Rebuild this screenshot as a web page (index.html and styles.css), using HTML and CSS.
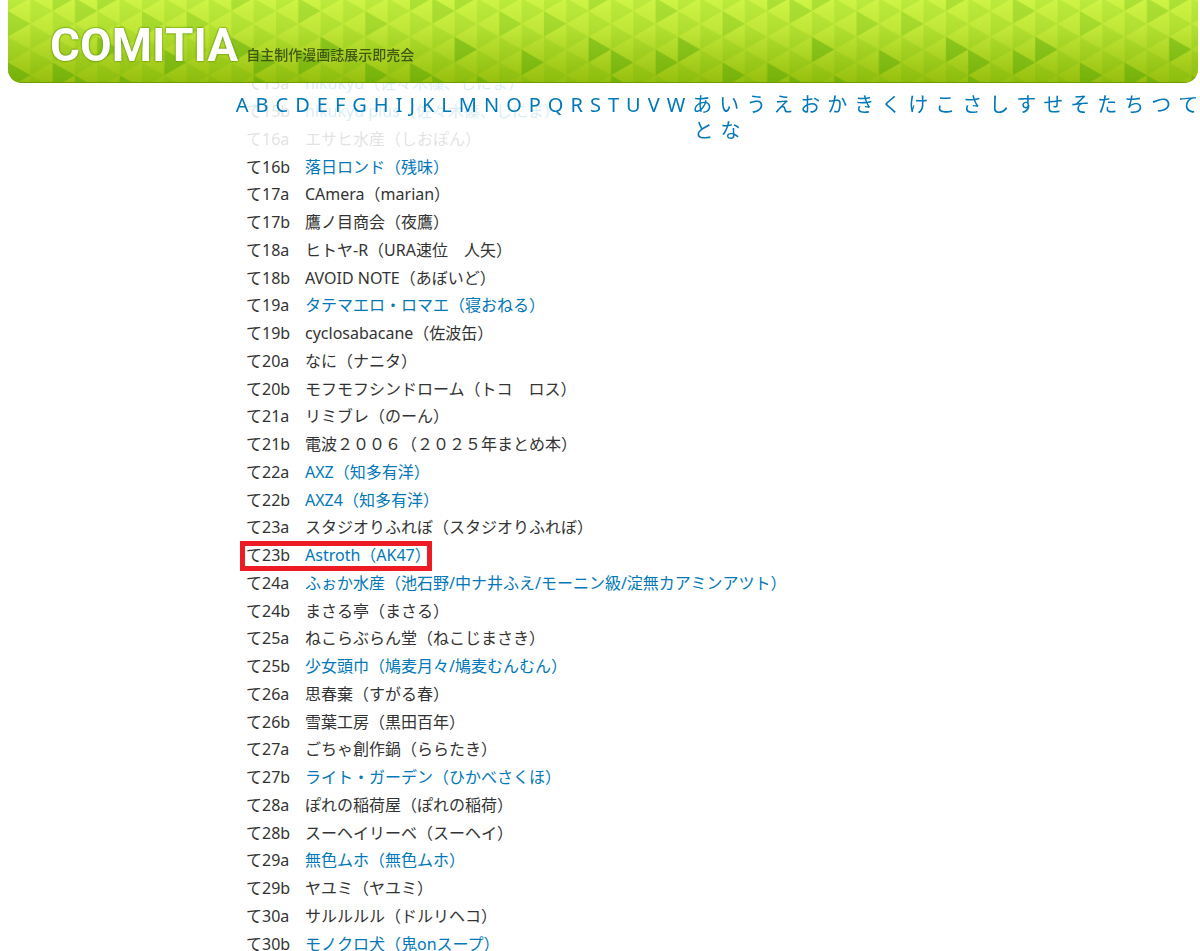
FILE: index.html
```html
<!DOCTYPE html>
<html lang="ja">
<head>
    <meta charset="UTF-8">
    <meta name="viewport" content="width=device-width, initial-scale=1.0">
    <title>COMITIA</title>
    <link rel="stylesheet" href="styles.css">
</head>
<body>
    <header class="header">
        <svg class="header-bg" aria-hidden="true">
            <defs>
                <linearGradient id="green" x1="0" y1="0" x2="0" y2="1">
                    <stop offset="0" stop-color="#cdf446"/>
                    <stop offset="0.35" stop-color="#c1e838"/>
                    <stop offset="1" stop-color="#96bf0e"/>
                </linearGradient>
                <!-- two columns of triangles -->
                <pattern id="tri" width="44.66" height="25.7" y="11" patternUnits="userSpaceOnUse">
                    <path d="M0 0L22.33 12.85L0 25.7z M22.33 -12.85L44.66 0L22.33 12.85z M22.33 12.85L44.66 25.7L22.33 38.55z" fill="#46a000" fill-opacity="0.13"/>
                </pattern>
                <!-- darker triangles, repeated every 16 columns -->
                <pattern id="dark" width="357.28" height="83" patternUnits="userSpaceOnUse">
                    <g fill="#46a000" fill-opacity="0.13">
                        <path d="M0 11l22.33 12.85L0 36.7z M133.98 11l22.33 12.85l-22.33 12.85z M178.64 11l22.33 12.85l-22.33 12.85z"/>
                        <path d="M66.99 -1.85l22.33 12.85l-22.33 12.85z M290.29 -1.85l22.33 12.85l-22.33 12.85z"/>
                        <path d="M44.66 -14.7l22.33 12.85l-22.33 12.85z M89.32 -14.7l22.33 12.85l-22.33 12.85z M223.3 -14.7l22.33 12.85l-22.33 12.85z"/>
                    </g>
                    <g fill="#3c9600" fill-opacity="0.28">
                        <path d="M89.32 36.7l22.33 12.85l-22.33 12.85z M223.3 36.7l22.33 12.85l-22.33 12.85z M312.62 36.7l22.33 12.85l-22.33 12.85z"/>
                        <path d="M156.31 49.55l22.33 12.85l-22.33 12.85z M245.63 49.55l22.33 12.85l-22.33 12.85z M290.29 49.55l22.33 12.85l-22.33 12.85z"/>
                        <path d="M0 62.4l22.33 12.85L0 88.1z M44.66 62.4l22.33 12.85l-22.33 12.85z"/>
                        <path d="M66.99 75.25l22.33 12.85H66.99z M111.65 75.25l22.33 12.85h-22.33z M245.63 75.25l22.33 12.85h-22.33z"/>
                    </g>
                </pattern>
            </defs>
            <rect width="100%" height="100%" fill="url(#green)"/>
            <rect width="100%" height="100%" fill="url(#tri)"/>
            <rect width="100%" height="100%" fill="url(#dark)"/>
        </svg>
        <h1 class="logo">COMITIA</h1>
        <p class="tagline">自主制作漫画誌展示即売会</p>
    </header>

    <nav class="index">
        <a href="#">A</a><a href="#">B</a><a href="#">C</a><a href="#">D</a><a href="#">E</a><a href="#">F</a><a href="#">G</a><a href="#">H</a><a href="#">I</a><a href="#">J</a><a href="#">K</a><a href="#">L</a><a href="#">M</a><a href="#">N</a><a href="#">O</a><a href="#">P</a><a href="#">Q</a><a href="#">R</a><a href="#">S</a><a href="#">T</a><a href="#">U</a><a href="#">V</a><a href="#">W</a>
        <a href="#">あ</a><a href="#">い</a><a href="#">う</a><a href="#">え</a><a href="#">お</a><a href="#">か</a><a href="#">き</a><a href="#">く</a><a href="#">け</a><a href="#">こ</a><a href="#">さ</a><a href="#">し</a><a href="#">す</a><a href="#">せ</a><a href="#">そ</a><a href="#">た</a><a href="#">ち</a><a href="#">つ</a><a href="#">て</a><a href="#">と</a><a href="#">な</a>
    </nav>

    <main class="content">
        <table class="circles">
            <tr><td>て15a</td><td><a href="#">nikukyu（佐々木篠、しにま）</a></td></tr>
            <tr><td>て15b</td><td><a href="#">nikukyu plus（佐々木篠、しにま）</a></td></tr>
            <tr><td>て16a</td><td>エサヒ水産（しおぽん）</td></tr>
            <tr><td>て16b</td><td><a href="#">落日ロンド（残味）</a></td></tr>
            <tr><td>て17a</td><td>CAmera（marian）</td></tr>
            <tr><td>て17b</td><td>鷹ノ目商会（夜鷹）</td></tr>
            <tr><td>て18a</td><td>ヒトヤ-R（URA速位　人矢）</td></tr>
            <tr><td>て18b</td><td>AVOID NOTE（あぼいど）</td></tr>
            <tr><td>て19a</td><td><a href="#">タテマエロ・ロマエ（寝おねる）</a></td></tr>
            <tr><td>て19b</td><td>cyclosabacane（佐波缶）</td></tr>
            <tr><td>て20a</td><td>なに（ナニタ）</td></tr>
            <tr><td>て20b</td><td>モフモフシンドローム（トコ　ロス）</td></tr>
            <tr><td>て21a</td><td>リミブレ（のーん）</td></tr>
            <tr><td>て21b</td><td>電波２００６（２０２５年まとめ本）</td></tr>
            <tr><td>て22a</td><td><a href="#">AXZ（知多有洋）</a></td></tr>
            <tr><td>て22b</td><td><a href="#">AXZ4（知多有洋）</a></td></tr>
            <tr><td>て23a</td><td>スタジオりふれぼ（スタジオりふれぼ）</td></tr>
            <tr class="marked"><td>て23b</td><td><a href="#">Astroth（AK47）</a></td></tr>
            <tr><td>て24a</td><td><a href="#">ふぉか水産（池石野/中ナ井ふえ/モーニン級/淀無カアミンアツト）</a></td></tr>
            <tr><td>て24b</td><td>まさる亭（まさる）</td></tr>
            <tr><td>て25a</td><td>ねこらぶらん堂（ねこじまさき）</td></tr>
            <tr><td>て25b</td><td><a href="#">少女頭巾（鳩麦月々/鳩麦むんむん）</a></td></tr>
            <tr><td>て26a</td><td>思春棄（すがる春）</td></tr>
            <tr><td>て26b</td><td>雪葉工房（黒田百年）</td></tr>
            <tr><td>て27a</td><td>ごちゃ創作鍋（ららたき）</td></tr>
            <tr><td>て27b</td><td><a href="#">ライト・ガーデン（ひかべさくほ）</a></td></tr>
            <tr><td>て28a</td><td>ぽれの稲荷屋（ぽれの稲荷）</td></tr>
            <tr><td>て28b</td><td>スーヘイリーベ（スーヘイ）</td></tr>
            <tr><td>て29a</td><td><a href="#">無色ムホ（無色ムホ）</a></td></tr>
            <tr><td>て29b</td><td>ヤユミ（ヤユミ）</td></tr>
            <tr><td>て30a</td><td>サルルルル（ドルリヘコ）</td></tr>
            <tr><td>て30b</td><td><a href="#">モノクロ犬（鬼onスープ）</a></td></tr>
        </table>
    </main>
</body>
</html>
```
FILE: styles.css
```css
body {
    margin: 0;
    height: 100vh;
    overflow: hidden;
    background-color: #fff;
    color: #333;
    font-family: "Noto Sans", "Noto Sans CJK JP", sans-serif;
    font-size: 16px;
}

a {
    color: #0078b9;
    text-decoration: none;
}

a:hover {
    text-decoration: underline;
}

/* green bar, stays over the list */
.header {
    position: fixed;
    top: 0;
    left: 8px;
    right: 2px;
    z-index: 3;
    display: flex;
    align-items: flex-end;
    gap: 8px;
    height: 83px;
    box-sizing: border-box;
    padding: 0 42px 16px;
    border-radius: 0 0 14px 14px;
    box-shadow: inset 0 -1px 0 #6d9c06;
    overflow: hidden;
}

.header-bg {
    position: absolute;
    top: 0;
    left: 0;
    z-index: -1;
    width: 100%;
    height: 82px;
}

.logo {
    margin: 0;
    color: #fff;
    font-family: Roboto, "Liberation Sans", sans-serif;
    font-size: 46px;
    font-weight: bold;
    line-height: 44px;
    text-shadow: 0 0 2px #5c9400, 0 0 2px #5c9400;
}

.tagline {
    margin: 0;
    color: #41590f;
    font-family: "Noto Sans CJK JP", sans-serif;
    font-size: 14px;
    font-weight: 500;
    line-height: 26px;
}

/* letter index, lets the list show through */
.index {
    position: fixed;
    top: 83px;
    left: 234px;
    right: 0;
    z-index: 2;
    display: flex;
    flex-wrap: wrap;
    justify-content: center;
    column-gap: 7px;
    padding: 9px 0 8px;
    background-color: rgba(255, 255, 255, 0.86);
    font-size: 20px;
    line-height: 26px;
}

.content {
    padding: 70px 8px 0 246px;
}

.circles {
    height: 888px;
    border-collapse: collapse;
}

.circles td {
    padding: 0;
    line-height: 27px;
    white-space: nowrap;
}

.circles td:first-child {
    min-width: 59px;
}

.marked {
    position: relative;
}

.marked::after {
    content: "";
    position: absolute;
    top: -1px;
    bottom: -1px;
    left: -6px;
    box-sizing: border-box;
    width: 192px;
    border: 5px solid #ed1c24;
}
```
